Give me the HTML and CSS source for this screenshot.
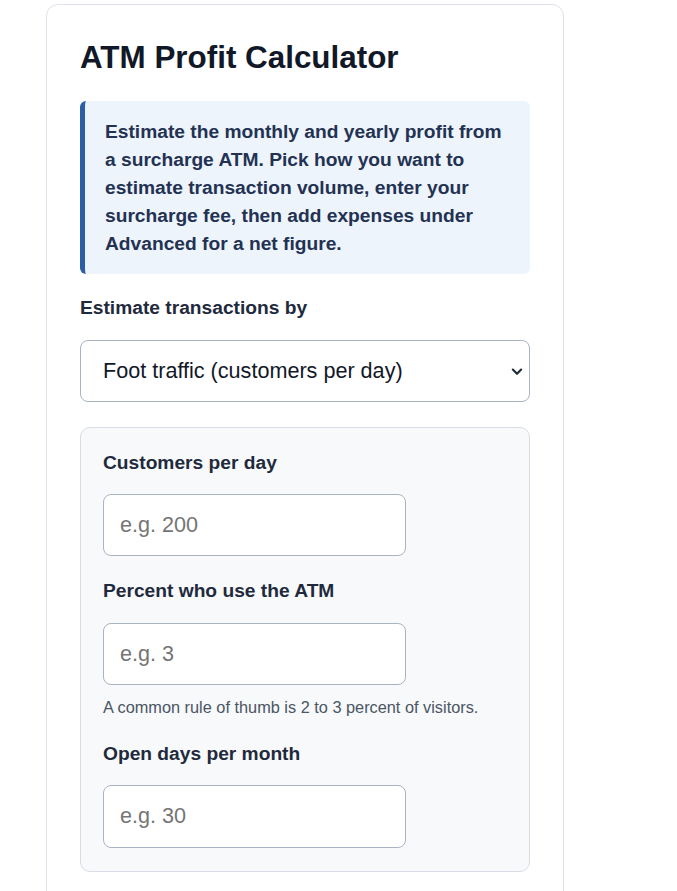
FILE: index.html
```html
<!DOCTYPE html>
<html lang="en">
<head>
<meta charset="utf-8">
<title>ATM Profit Calculator</title>
<link rel="stylesheet" href="styles.css">
</head>
<body>
<main class="page">
  <section class="card">
    <h1 class="title">ATM Profit Calculator</h1>
    <p class="intro">Estimate the monthly and yearly profit from a surcharge ATM. Pick how you want to estimate transaction volume, enter your surcharge fee, then add expenses under Advanced for a net figure.</p>

    <label class="label" for="mode">Estimate transactions by</label>
    <div class="select-wrap">
      <select class="select" id="mode">
        <option>Foot traffic (customers per day)</option>
        <option>Transactions per month</option>
      </select>
      <svg class="chevron" width="12" height="8" viewBox="0 0 12 8" aria-hidden="true">
        <path d="M1.8 1.6 L6 5.8 L10.2 1.6" fill="none" stroke="#1f2937" stroke-width="2.1" stroke-linecap="round" stroke-linejoin="round"/>
      </svg>
    </div>

    <div class="panel">
      <div class="field">
        <label class="label" for="customers">Customers per day</label>
        <input class="input" id="customers" type="text" placeholder="e.g. 200">
      </div>
      <div class="field">
        <label class="label" for="percent">Percent who use the ATM</label>
        <input class="input" id="percent" type="text" placeholder="e.g. 3">
        <p class="help">A common rule of thumb is 2 to 3 percent of visitors.</p>
      </div>
      <div class="field">
        <label class="label" for="days">Open days per month</label>
        <input class="input" id="days" type="text" placeholder="e.g. 30">
      </div>
    </div>
  </section>
</main>
</body>
</html>
```

FILE: styles.css
```css
html, body {
  margin: 0;
  padding: 0;
  background: #ffffff;
  overflow: hidden;
  height: 891px;
}

body {
  font-family: "Liberation Sans", Arial, sans-serif;
  color: #1f2937;
}

.page {
  padding: 4px 0 0 46px;
}

.card {
  box-sizing: border-box;
  width: 518px;
  border: 1px solid #dde2ea;
  border-radius: 12px;
  padding: 34px 33px 60px 33px;
  background: #ffffff;
}

.title {
  margin: 0 0 25px 0;
  font-size: 31.4px;
  line-height: 37.4px;
  font-weight: 700;
  color: #111827;
}

.intro {
  margin: 0 0 21px 0;
  padding: 16.8px 20px;
  background: #eef4fc;
  border-left: 5px solid #2c5ea6;
  border-radius: 6px;
  font-size: 19.2px;
  line-height: 27.84px;
  font-weight: 700;
  color: #233252;
}

.label {
  display: block;
  font-size: 19.2px;
  line-height: 1.4;
  font-weight: 700;
  color: #1f2a3d;
  margin-bottom: 17.5px;
}

.select-wrap {
  position: relative;
  margin: 0 0 24.5px 0;
}

.select {
  display: block;
  box-sizing: border-box;
  width: 100%;
  height: 62.5px;
  margin: 0;
  padding: 0 36px 0 22px;
  border: 1px solid #aab3c2;
  border-radius: 8px;
  background-color: #ffffff;
  -webkit-appearance: none;
  appearance: none;
  font-family: "Liberation Sans", Arial, sans-serif;
  font-size: 21.6px;
  color: #111827;
}

.chevron {
  position: absolute;
  right: 7px;
  top: 28px;
  pointer-events: none;
}

.panel {
  display: flex;
  flex-direction: column;
  gap: 22px;
  padding: 22px 22px 23.5px 22px;
  background: #f7f9fb;
  border: 1px solid #d8dde5;
  border-radius: 10px;
}

.field {
  display: flex;
  flex-direction: column;
  align-items: flex-start;
}

.input {
  box-sizing: border-box;
  width: 302.5px;
  height: 62.5px;
  padding: 0 16px;
  border: 1px solid #aab3c2;
  border-radius: 8px;
  background: #ffffff;
  font-family: "Liberation Sans", Arial, sans-serif;
  font-size: 21.6px;
  color: #111827;
}

.input::placeholder {
  color: #757575;
}

.help {
  margin: 10.5px 0 0 0;
  font-size: 16.32px;
  line-height: 1.4;
  color: #4b5563;
}
```
